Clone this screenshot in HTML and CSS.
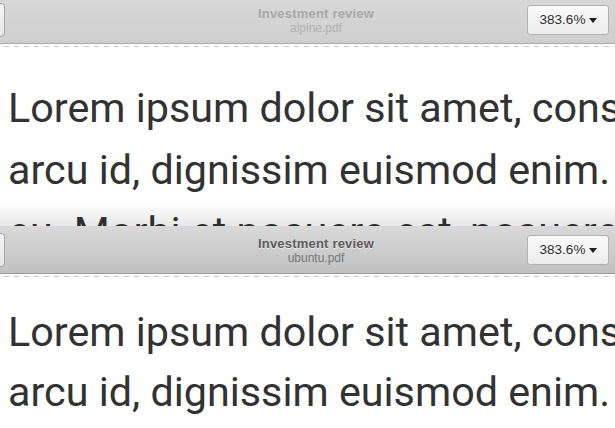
FILE: index.html
```html
<!DOCTYPE html>
<html>
<head>
<meta charset="utf-8">
<link rel="stylesheet" href="styles.css">
</head>
<body>
<div class="window backdrop first">
  <div class="headerbar">
    <div class="side-btn"></div>
    <div class="titles">
      <div class="title">Investment review</div>
      <div class="subtitle">alpine.pdf</div>
    </div>
    <div class="zoom-btn"><span>383.6%</span><span class="arrow"></span></div>
  </div>
  <div class="doc">
    <div class="dash"></div>
    <div class="page">
      <div class="line">Lorem ipsum dolor sit amet, consectetur</div>
      <div class="line">arcu id, dignissim euismod enim.</div>
      <div class="line">eu. Morbi et posuere est, posuere</div>
    </div>
    <div class="fade"></div>
  </div>
</div>
<div class="window focused">
  <div class="headerbar">
    <div class="side-btn"></div>
    <div class="titles">
      <div class="title">Investment review</div>
      <div class="subtitle">ubuntu.pdf</div>
    </div>
    <div class="zoom-btn"><span>383.6%</span><span class="arrow"></span></div>
  </div>
  <div class="doc">
    <div class="dash"></div>
    <div class="page">
      <div class="line">Lorem ipsum dolor sit amet, consectetur</div>
      <div class="line">arcu id, dignissim euismod enim.</div>
    </div>
  </div>
</div>
</body>
</html>
```
FILE: styles.css
```css
html, body {
  margin: 0;
  padding: 0;
  width: 615px;
  height: 428px;
  overflow: hidden;
  background: #ffffff;
}

.window {
  position: relative;
  display: flex;
  flex-direction: column;
  height: 230px;
  overflow: hidden;
  background: #ffffff;
}

.first {
  margin-top: -4px;
}

.headerbar {
  flex: none;
  height: 47px;
  border-bottom: 1px solid #a4a4a4;
  display: flex;
  align-items: center;
  font-family: "Liberation Sans", Arial, sans-serif;
}

.backdrop .headerbar {
  background: linear-gradient(#d8d8d8, #cfcfcf);
  border-bottom-color: #a9a9a9;
}

.focused .headerbar {
  background: linear-gradient(#d9d9d9, #c1c1c1);
  border-bottom-color: #999999;
}

.side-btn {
  flex: none;
  width: 20px;
  height: 34px;
  margin-left: -15px;
  box-sizing: border-box;
  border: 1px solid #a6a6a6;
  border-radius: 4px;
  background: linear-gradient(#f6f6f6, #e6e6e6);
}

.titles {
  flex: 1;
  display: flex;
  flex-direction: column;
  align-items: center;
  padding-left: 100px;
  padding-top: 1px;
}

.title {
  font-weight: bold;
  font-size: 13px;
  line-height: 15px;
  letter-spacing: 0.2px;
}

.subtitle {
  font-size: 12px;
  line-height: 14px;
}

.backdrop .title { color: #a8a8a8; }
.backdrop .subtitle { color: #b0b0b0; }
.focused .title { color: #5c5c5c; text-shadow: 0 1px 0 rgba(255,255,255,0.6); }
.focused .subtitle { color: #777777; }

.zoom-btn {
  flex: none;
  width: 82px;
  height: 30px;
  margin-right: 6px;
  box-sizing: border-box;
  border: 1px solid #b2b2b2;
  border-radius: 3px;
  background: linear-gradient(#fafafa, #ededed);
  display: flex;
  align-items: center;
  justify-content: center;
  gap: 4px;
  padding-left: 1px;
  font-size: 13.5px;
  color: #2e2e2e;
}

.arrow {
  width: 0;
  height: 0;
  border-left: 4.5px solid transparent;
  border-right: 4.5px solid transparent;
  border-top: 5px solid #1e1e1e;
  margin-top: 1px;
}

.doc {
  position: relative;
  flex: 1;
  overflow: hidden;
}

.dash {
  height: 1px;
  margin: 2px 0 0 4px;
  background: repeating-linear-gradient(90deg, #c6c6c6 0 5px, transparent 5px 10px);
}

.page {
  padding: 30px 0 0 8px;
  font-family: Roboto, "Liberation Sans", sans-serif;
  font-size: 41.3px;
  line-height: 62px;
  color: #323232;
  white-space: nowrap;
}

.focused .page {
  padding-top: 25px;
  line-height: 60px;
}

.line {
  white-space: nowrap;
}

.fade {
  position: absolute;
  left: 0;
  right: 0;
  bottom: 0;
  height: 24px;
  background: linear-gradient(rgba(0,0,0,0), rgba(0,0,0,0.09));
}
```
